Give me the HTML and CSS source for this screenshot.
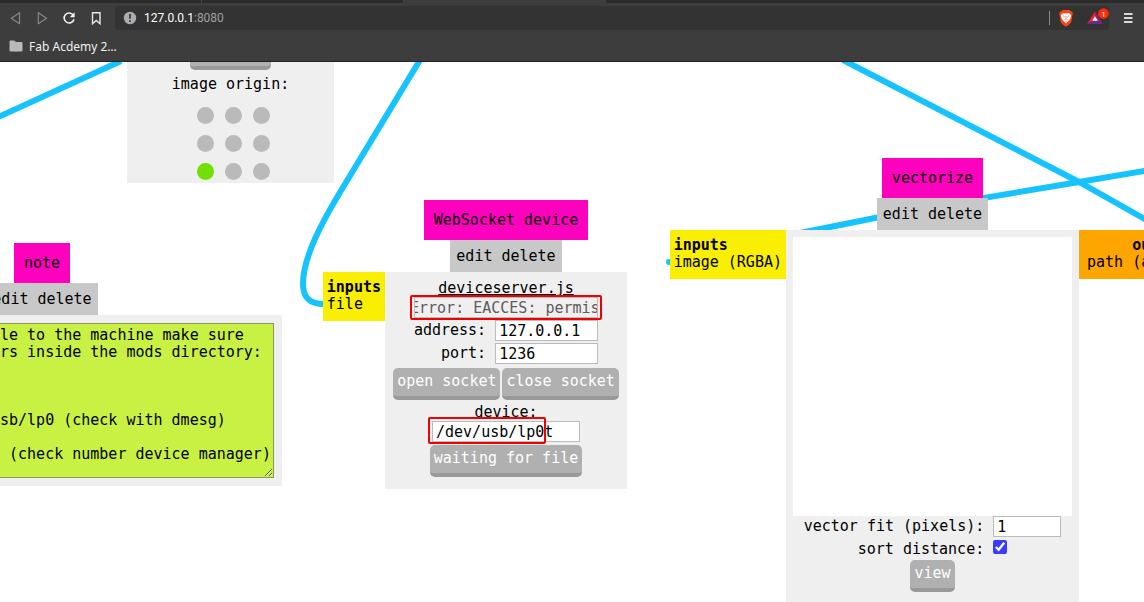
FILE: index.html
```html
<!DOCTYPE html>
<html lang="en">
<head>
<meta charset="utf-8">
<title>mods</title>
<link rel="stylesheet" href="styles.css">
</head>
<body>
<header class="browser">
  <div class="tabs"><span class="tab"></span><span class="tab"></span><span class="tab tab-active"></span><span class="tab tab-last"></span></div>
  <div class="toolbar">
    <nav class="nav">
      <button aria-label="Back"><svg width="16" height="16" viewBox="0 0 16 16"><path d="M12.500 2.700v11L4.300 8.200z" fill="none" stroke="#868686" stroke-width="1.200" stroke-linejoin="round"/></svg></button>
      <button aria-label="Forward"><svg width="16" height="16" viewBox="0 0 16 16"><path d="M4.300 2.700v11l8.200-5.500z" fill="none" stroke="#868686" stroke-width="1.200" stroke-linejoin="round"/></svg></button>
      <button aria-label="Reload"><svg width="16" height="16" viewBox="0 0 16 16"><path d="M12.200 5A5 5 0 1 0 13 9.200" fill="none" stroke="#f2f2f2" stroke-width="1.600"/><path d="M13.600 2.300v5H8.700z" fill="#f2f2f2"/></svg></button>
      <button aria-label="Bookmark"><svg width="16" height="16" viewBox="0 0 16 16"><path d="M4.500 2.800h7.500v10.900L8.250 10.400 4.500 13.700z" fill="none" stroke="#e6e6e6" stroke-width="1.400"/></svg></button>
    </nav>
    <div class="address">
      <svg width="14" height="14" viewBox="0 0 14 14"><circle cx="7" cy="7" r="6.200" fill="#a9acb0"/><path d="M7 3v4.800M7 9.300v1.700" stroke="#333" stroke-width="1.700"/></svg>
      <span class="url">127.0.0.1<span class="port">:8080</span></span>
      <span class="divider"></span>
      <svg class="brave" width="16" height="18" viewBox="0 0 16 18"><path d="M4.500 1h7l1 1.300 1.800.5.6 2-.6 2-.9 5.700c-.5 2-3 3.600-5.400 5.200-2.400-1.600-4.900-3.200-5.400-5.200L1.700 6.800l-.6-2 .6-2 1.800-.5z" fill="#fb4314"/><path d="M5 4l3 .5 3-.5 2.200 2.200-.9 3.500-2.200 2.700L8 14.200l-2.100-1.800-2.200-2.700-.9-3.500z" fill="#fff"/><path d="M4.800 6.800l1.800.8M11.200 6.800l-1.800.8M8 7v2.500M6.500 10.700l1.500-.9 1.500.9M7.300 12.300h1.400" stroke="#e58a70" stroke-width=".9" fill="none"/></svg>
      <svg class="bat" width="22" height="20" viewBox="0 0 22 20"><path d="M8 4.500L0 17l8-4.500z" fill="#ff1d25"/><path d="M8 4.500L16 17l-8-4.500z" fill="#9e1f63"/><path d="M0 17h16l-8-5z" fill="#662d91"/><path d="M8 9.300L5.200 13.800h5.600z" fill="#fff"/><circle cx="16.500" cy="6.500" r="5.300" fill="#fb2d0a"/><text class="badge" x="16.500" y="9.500" text-anchor="middle">1</text></svg>
    </div>
    <button class="menu" aria-label="Menu"><svg width="16" height="16" viewBox="0 0 16 16"><path d="M4 4h8.500M4 8h8.500M4 12h8.500" stroke="#d8d8d8" stroke-width="1.800"/></svg></button>
  </div>
  <a class="bookmark" href="#"><svg width="14" height="12" viewBox="0 0 14 12"><path d="M1 1h4.500L7 2.500h6V11H1z" fill="#b9b9b9" stroke="#b9b9b9" stroke-linejoin="round"/></svg>Fab Acdemy 2…</a>
</header>

<main class="canvas">
  <svg class="wires" width="1144" height="540" viewBox="0 62 1144 540">
    <path d="M121 61L-4 118"/>
    <path d="M420 60L342 189C322 222 303 257 303 284C303 298 310 304 324 304"/>
    <path d="M843 60L1079 182L1150 222"/>
    <path d="M1150 170L1079 182L930 207L800 233"/>
    <path d="M676 262h-7" stroke-linecap="round"/>
  </svg>

  <section class="node node-origin">
    <div class="body">
      <button class="btn" aria-label="invert"></button>
      <div class="text">image origin:</div>
      <div class="dots">
        <input type="radio" name="origin" aria-label="top left"><input type="radio" name="origin" aria-label="top"><input type="radio" name="origin" aria-label="top right">
        <input type="radio" name="origin" aria-label="left"><input type="radio" name="origin" aria-label="center"><input type="radio" name="origin" aria-label="right">
        <input type="radio" name="origin" aria-label="bottom left" checked><input type="radio" name="origin" aria-label="bottom"><input type="radio" name="origin" aria-label="bottom right">
      </div>
    </div>
  </section>

  <section class="node node-note">
    <h2 class="title">note</h2>
    <div class="actions"><button>edit</button><button>delete</button></div>
    <div class="body">
      <textarea aria-label="note" spellcheck="false">le to the machine make sure
rs inside the mods directory:



sb/lp0 (check with dmesg)

 (check number device manager)</textarea>
    </div>
  </section>

  <section class="node node-socket">
    <h2 class="title">WebSocket device</h2>
    <div class="actions"><button>edit</button><button>delete</button></div>
    <div class="body">
      <div class="ports inputs"><b>inputs</b><span>file</span></div>
      <a class="text link" href="#">deviceserver.js</a>
      <div class="marked"><input class="field status" aria-label="status" value="Error: EACCES: permission" readonly><span class="mark mark-status"></span></div>
      <div class="form">
        <label for="address">address:</label><input class="field medium" id="address" value="127.0.0.1">
        <label for="port">port:</label><input class="field medium" id="port" value="1236">
      </div>
      <div class="buttons"><button class="btn">open socket</button><button class="btn">close socket</button></div>
      <label class="text" for="device">device:</label>
      <div class="marked"><input class="field device" id="device" value="/dev/usb/lp0t" spellcheck="false"><span class="mark mark-device"></span></div>
      <button class="btn">waiting for file</button>
    </div>
  </section>

  <section class="node node-vector">
    <h2 class="title">vectorize</h2>
    <div class="actions"><button>edit</button><button>delete</button></div>
    <div class="body">
      <div class="ports inputs"><b>inputs</b><span>image (RGBA)</span></div>
      <div class="ports outputs"><b>outputs</b><span>path (array)</span></div>
      <div class="preview"></div>
      <label class="row">vector fit (pixels): <input class="field small" value="1"></label>
      <label class="row">sort distance: <input class="check" type="checkbox" checked></label>
      <button class="btn">view</button>
    </div>
  </section>
</main>
</body>
</html>
```
FILE: styles.css
```css
* { box-sizing: border-box; }
body {
  margin: 0;
  min-height: 100vh;
  display: flex;
  flex-direction: column;
  background: #fff;
  color: #000;
  font: 15px/17px "DejaVu Sans Mono", monospace;
}
button, input, textarea { font: inherit; color: inherit; }
button { border: 0; background: none; padding: 0; }

/* browser frame */
.browser {
  height: 62px;
  background: #3d3d3d;
  border-bottom: 1px solid #222;
  font-family: "Noto Sans", sans-serif;
}
.tabs { display: flex; height: 3px; background: #2b2b2b; }
.tab { width: 202px; border-right: 1px solid #444; }
.tab-active { background: #3d3d3d; }
.tab-last { border: 0; }
.toolbar { display: flex; align-items: center; height: 30px; }
.nav { display: flex; gap: 11px; padding: 0 11px 0 7px; }
.nav button, .menu { display: flex; }
.address {
  flex: 1;
  display: flex;
  align-items: center;
  height: 24px;
  padding: 0 0 0 8px;
  border-radius: 3px;
  background: #333;
}
.url {
  flex: 1;
  padding-left: 7px;
  font-family: Roboto, sans-serif;
  font-size: 12px;
  color: #fff;
}
.port { color: #a0a0a0; }
.divider { width: 1px; height: 14px; background: #888; }
.brave { margin: 0 13px 0 8px; }
.bat { margin-bottom: 2px; }
.badge { font: 8px Roboto, sans-serif; fill: #fff; }
.menu { padding: 0 8px 0 11px; }
.bookmark {
  display: inline-flex;
  align-items: center;
  gap: 6px;
  height: 26px;
  padding-left: 9px;
  font-size: 12px;
  color: #f0f0f0;
  text-decoration: none;
}

/* program canvas */
.canvas { position: relative; flex: 1; overflow: hidden; }
.wires { position: absolute; left: 0; top: 0; }
.wires path { fill: none; stroke: #17c3ff; stroke-width: 6; }

.node {
  position: absolute;
  display: flex;
  flex-direction: column;
  align-items: center;
}
.node-origin { left: 127px; top: -24px; width: 207px; }
.node-note { left: -198px; top: 181px; width: 480px; }
.node-socket { left: 385px; top: 138px; width: 242px; }
.node-vector { left: 786px; top: 96px; width: 293px; }

.title {
  margin: 0;
  padding: 0 10px;
  background: #ff00bf;
  font: inherit;
  line-height: 40px;
}
.actions {
  display: flex;
  gap: 9px;
  height: 32px;
  padding: 0 6px;
  background: #c8c8c8;
}
.body {
  position: relative;
  display: flex;
  flex-direction: column;
  align-items: center;
  width: 100%;
  background: #efefef;
}
.btn {
  height: 32px;
  padding: 0 4px 2px;
  border-bottom: 4px solid #999;
  border-radius: 5px;
  background: #b0b0b0;
  color: #fff;
}
.ports {
  position: absolute;
  top: 0;
  display: flex;
  flex-direction: column;
  height: 49px;
  padding: 7px 4px;
  white-space: nowrap;
}
.inputs { right: 100%; background: #faef00; }
.outputs { left: 100%; padding: 7px 8px; align-items: flex-end; background: #ffa500; }

.row { display: flex; align-items: center; gap: 9px; }
.form {
  display: grid;
  grid-template-columns: auto auto;
  align-items: center;
  justify-items: end;
  gap: 2px 9px;
  margin: 2px 0;
}
.field {
  height: 21px;
  padding: 0 3px;
  border: 1px solid #bbb;
  border-radius: 0;
  background: #fff;
}
.status {
  width: 184px;
  padding: 0;
  background: #efefef;
  color: #5c5c5c;
  text-indent: -5px;
}
.medium { width: 103px; }
.small { width: 68px; }
.device { width: 148px; }
.marked { position: relative; display: flex; }
.mark { position: absolute; border: 2px solid #f00000; border-radius: 2px; pointer-events: none; }
.mark-status { inset: -2px -4px; }
.mark-device { inset: -4px 34px -2px -4px; }

.node-origin .body { padding-bottom: 3px; }
.node-origin .btn { width: 81px; }
.node-origin .text { margin: 6px 0 14px; }
.dots { display: grid; grid-template-columns: repeat(3, 17px); gap: 11px; padding-left: 6px; }
.dots input { appearance: none; width: 17px; height: 17px; margin: 0; border-radius: 50%; background: #bababa; }
.dots input:checked { background: #70e000; }

.node-note .body { padding: 8px 8px; }
.node-note textarea {
  display: block;
  width: 100%;
  height: 155px;
  padding: 3px 0 0 189px;
  border: 1px solid #8b9660;
  background: #c9f144;
  white-space: pre;
  overflow: hidden;
}

.node-socket .body { padding: 8px 0 12px; }
.link { color: inherit; }
.buttons { display: flex; gap: 2px; margin: 2px 0 4px; }
.node-socket .marked + .btn { margin-top: 3px; }

.node-vector .body { padding: 7px 7px 12px; }
.preview { width: 100%; aspect-ratio: 1; background: #fff; }
.check { width: 14px; height: 14px; margin: 0 0 4px; accent-color: #3b3bff; }
.node-vector .row + .row { margin-top: 3px; }
.node-vector .btn { margin-top: 2px; }
```
